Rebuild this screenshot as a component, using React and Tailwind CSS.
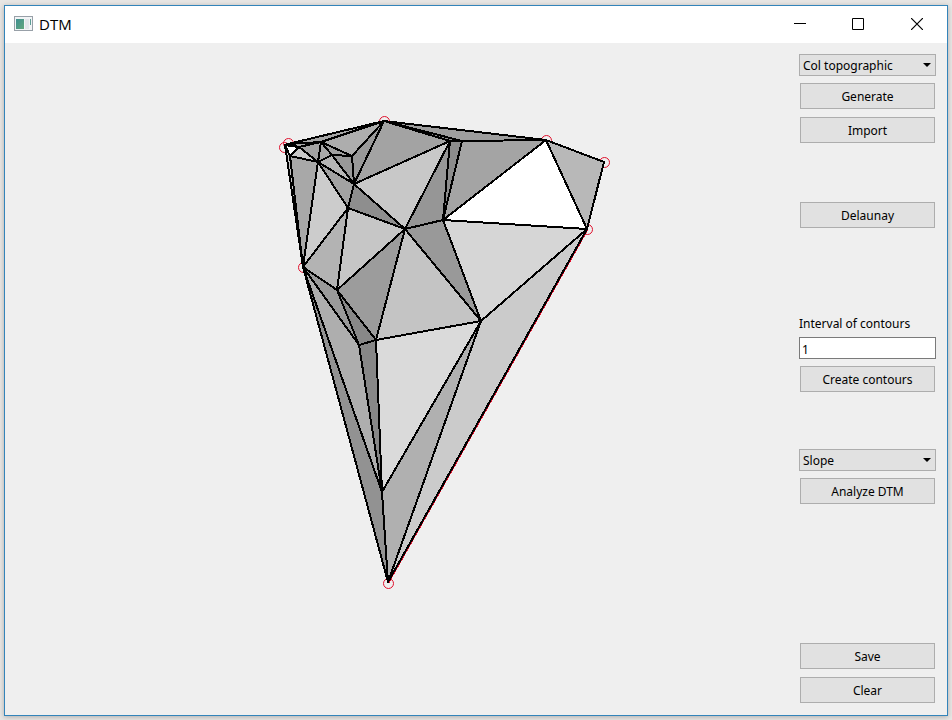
import React from "react";

const points = {
  A: [285, 145], P: [288, 144], B: [384, 121], C: [546, 140], D: [604, 162],
  E: [587, 229], F: [481, 321], G: [388, 582], H: [382, 492], I: [376, 340],
  J: [359, 345], K: [337, 290], L: [303, 267], M: [348, 208], N: [405, 229],
  O: [443, 220], Q: [450, 141], R: [462, 141], S: [354, 184], T: [352, 156],
  U: [321, 142], V: [318, 162], W: [332, 155], X: [290, 156], Y: [299, 147],
};

const triangles = [
  ["APB", "#a6a6a6"], ["PUB", "#a6a6a6"], ["PYU", "#a8a8a8"], ["APY", "#ffffff"],
  ["AYX", "#ffffff"], ["XYV", "#c8c8c8"], ["YUV", "#a4a4a4"], ["AXL", "#c8c8c8"],
  ["XVL", "#a8a8a8"], ["VLM", "#cccccc"], ["VMS", "#a2a2a2"],
  ["VWS", "#b5b5b5"], ["UVW", "#a8a8a8"], ["UWT", "#a0a0a0"], ["WTS", "#989898"],
  ["UTB", "#adadad"], ["TBS", "#999999"], ["BSQ", "#a3a3a3"], ["SQN", "#c8c8c8"],
  ["SMN", "#8e8e8e"], ["QNO", "#969696"], ["QRO", "#8c8c8c"], ["BQR", "#8c8c8c"],
  ["BRC", "#9e9e9e"], ["RCO", "#a4a4a4"], ["COE", "#ffffff"], ["CDE", "#b8b8b8"],
  ["OEF", "#d6d6d6"], ["NOF", "#999999"], ["NFI", "#c4c4c4"], ["NKI", "#9c9c9c"],
  ["MNK", "#c6c6c6"], ["LMK", "#b3b3b3"], ["LKJ", "#9a9a9a"], ["KJI", "#888888"],
  ["LJH", "#aeaeae"], ["JIH", "#878787"], ["IFH", "#dadada"], ["LHG", "#929292"],
  ["HFG", "#b0b0b0"], ["FEG", "#cbcbcb"],
];

const hull = [
  [284.5, 147.5], [288.5, 143.5], [384.5, 121.5], [546.5, 140.5], [604.5, 162.5],
  [587.5, 229.5], [388.5, 583.5], [303.5, 267.5],
];

const toPoints = (list) => list.map((p) => p.join(",")).join(" ");

function Terrain() {
  return (
    <svg
      role="img"
      aria-label="Triangulated terrain"
      viewBox="5 43 794 672"
      className="block h-full w-full"
    >
      <g fill="none" stroke="#e0102c" strokeWidth="1">
        <path d="M588 229.500L389 582.500" shapeRendering="crispEdges" />
        {hull.map(([x, y]) => (
          <circle key={x} cx={x} cy={y} r="5" />
        ))}
      </g>
      <g stroke="#000000" strokeWidth="2" strokeLinejoin="round" shapeRendering="crispEdges">
        {triangles.map(([name, fill]) => (
          <polygon
            key={name}
            points={toPoints(name.split("").map((k) => points[k]))}
            fill={fill}
          />
        ))}
      </g>
    </svg>
  );
}

function Button({ children, className = "" }) {
  return (
    <button
      type="button"
      className={`mx-px h-[26px] border border-[#adadad] bg-[#e1e1e1] pt-0.5 text-center ${className}`}
    >
      {children}
    </button>
  );
}

function Select({ label, options, className = "" }) {
  return (
    <div className={`relative h-[22px] ${className}`}>
      <select
        aria-label={label}
        className="block h-full w-full appearance-none border border-[#adadad] bg-[#e1e1e1] pt-0.5 pr-5 pl-[3px]"
      >
        {options.map((o) => (
          <option key={o}>{o}</option>
        ))}
      </select>
      <svg
        viewBox="0 0 8 4"
        className="pointer-events-none absolute top-[9px] right-[5px] h-1 w-2"
        aria-hidden="true"
      >
        <path d="M0 0h8L4 4z" />
      </svg>
    </div>
  );
}

function TitleBar() {
  return (
    <header className="flex h-[37px] shrink-0 items-center bg-white pb-0.5 pl-[9px]">
      <svg viewBox="0 0 19 15" className="h-[15px] w-[19px]" aria-hidden="true">
        <defs>
          <linearGradient id="pane" x1="0" y1="0" x2="1" y2="1">
            <stop offset="0" stopColor="#3f8f91" />
            <stop offset="1" stopColor="#62a77d" />
          </linearGradient>
        </defs>
        <rect x=".5" y=".5" width="18" height="14" fill="#f2f4f6" stroke="#98a0a8" />
        <rect x="2" y="3" width="8" height="10" fill="url(#pane)" />
        <rect x="11" y="3" width="4" height="10" fill="#e2e5ea" />
        <rect x="16" y="3" width="1" height="6" fill="#5b9c94" />
      </svg>
      <h1 className="ml-[6px] font-['Open_Sans','Noto_Sans',sans-serif] text-[15px] leading-5">DTM</h1>
      <div className="ml-auto flex h-full">
        <button type="button" aria-label="Minimize" className="grid w-[58px] place-items-center">
          <svg viewBox="0 0 12 12" className="h-3 w-3">
            <path d="M0 5.5h12" stroke="#000" />
          </svg>
        </button>
        <button type="button" aria-label="Maximize" className="grid w-[58px] place-items-center">
          <svg viewBox="0 0 12 12" className="h-3 w-3" fill="none">
            <path d="M.5 .5h11v11H.5z" stroke="#000" />
          </svg>
        </button>
        <button type="button" aria-label="Close" className="grid w-[60px] place-items-center">
          <svg viewBox="0 0 12 12" className="h-3 w-3">
            <path d="M0 0l12 12M12 0L0 12" stroke="#000" strokeWidth="1.2" />
          </svg>
        </button>
      </div>
    </header>
  );
}

export default function App() {
  return (
    <div className="flex h-screen min-h-[600px] bg-[#e8e6e4] px-1 pt-[5px] pb-1 font-['Noto_Sans','Open_Sans',sans-serif] text-[12px] leading-4 text-black">
      <div className="flex min-w-0 flex-1 flex-col border border-[#3384ba] bg-[#efefef] shadow-[0_1px_5px_rgba(0,0,0,0.25)]">
        <TitleBar />
        <div className="flex min-h-0 flex-1">
          <main className="min-w-0 flex-1">
            <Terrain />
          </main>
          <aside className="mr-[11px] flex w-[137px] flex-col pt-[11px] pb-3">
            <Select label="Terrain type" options={["Col topographic"]} />
            <Button className="mt-[7px]">Generate</Button>
            <Button className="mt-2">Import</Button>
            <Button className="mt-[59px]">Delaunay</Button>
            <label htmlFor="interval" className="mt-[88px]">Interval of contours</label>
            <input
              id="interval"
              type="text"
              defaultValue="1"
              className="mt-[5px] h-[22px] w-full border border-[#7a7a7a] bg-white px-[2px] pt-0.5"
            />
            <Button className="mt-[7px]">Create contours</Button>
            <Select label="Analysis" options={["Slope"]} className="mt-[57px]" />
            <Button className="mt-[7px]">Analyze DTM</Button>
            <Button className="mt-auto">Save</Button>
            <Button className="mt-2">Clear</Button>
          </aside>
        </div>
      </div>
    </div>
  );
}
